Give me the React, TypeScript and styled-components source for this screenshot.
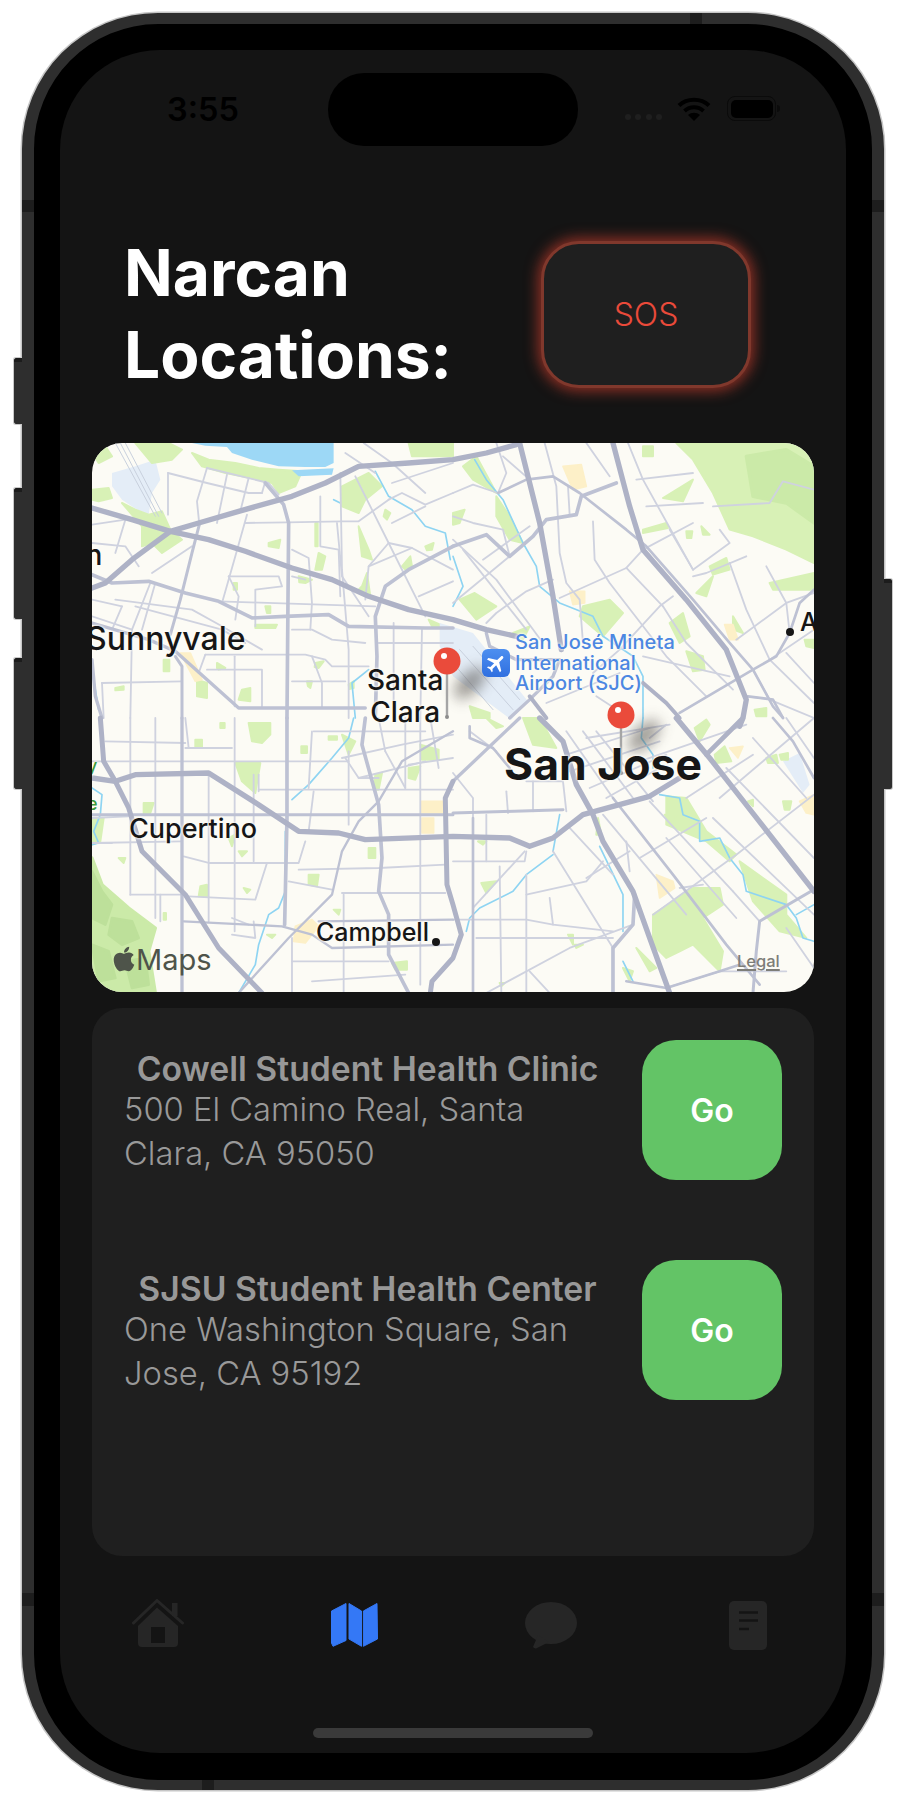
import React from "react";
import styled, { createGlobalStyle } from "styled-components";
import { FaApple } from "react-icons/fa";

const Global = createGlobalStyle`
  html, body { margin: 0; padding: 0; background: #fff; }
  body { font-family: Inter, "Liberation Sans", sans-serif; }
`;

const Device = styled.div`
  position: relative;
  width: 906px;
  height: 1796px;
  overflow: hidden;
  padding-top: 13px;
  box-sizing: border-box;
`;

const Frame = styled.div`
  box-sizing: border-box;
  width: 862px;
  margin-left: 22px;
  border: 12px solid #2e2e2e;
  border-top-width: 11px;
  border-bottom-width: 10px;
  border-radius: 136px;
  background: #000;
  padding: 26px 26px 27px;
  box-shadow: 0 0 0 1.5px #c6c6c6;
`;

const SideButton = styled.div<{ $top: number; $h: number; $right?: boolean }>`
  position: absolute;
  top: ${(p) => p.$top}px;
  height: ${(p) => p.$h}px;
  width: 9px;
  box-sizing: border-box;
  ${(p) => (p.$right ? "left: 884px;" : "left: 13px;")}
  background: linear-gradient(#1c1c1c 0 4px, #2e2e2e 4px);
  border: 1px solid #c8c8c8;
  ${(p) => (p.$right ? "border-left: 0;" : "border-right: 0;")}
  border-radius: ${(p) => (p.$right ? "0 3px 3px 0" : "3px 0 0 3px")};
`;

const Band = styled.div<{ $x: number; $y: number; $w: number; $h: number }>`
  position: absolute;
  left: ${(p) => p.$x}px;
  top: ${(p) => p.$y}px;
  width: ${(p) => p.$w}px;
  height: ${(p) => p.$h}px;
  background: #1d1d1d;
`;

const Screen = styled.div`
  height: 1703px;
  border-radius: 100px;
  background: #141414;
  overflow: hidden;
`;

const StatusBar = styled.div`
  display: grid;
  grid-template-columns: 1fr 250px 1fr;
  margin-top: 23px;
  height: 73px;
`;

const Time = styled.div`
  padding: 22px 0 0 107px;
  font-size: 32.5px;
  line-height: 30px;
  font-weight: 600;
  color: #000;
`;

const Island = styled.div`
  background: #000;
  border-radius: 36px;
`;

const StatusIcons = styled.div`
  display: flex;
  justify-content: flex-end;
  align-items: flex-end;
  height: 25px;
  padding: 23px 70px 0 0;
`;

const Dots = styled.div`
  display: flex;
  gap: 4.5px;
  margin-right: 15px;
  padding-bottom: 1px;
`;

const Dot = styled.span`
  width: 6px;
  height: 6px;
  border-radius: 50%;
  background: #1f1f1f;
`;

const Battery = styled.div`
  position: relative;
  box-sizing: border-box;
  width: 49px;
  height: 25px;
  margin-left: 16px;
  padding: 2.5px;
  border: 1.5px solid #0b0b0b;
  border-radius: 8px;
  &::before {
    content: "";
    display: block;
    height: 100%;
    background: #000;
    border-radius: 5px;
  }
  &::after {
    content: "";
    position: absolute;
    right: -5px;
    top: 8px;
    width: 3px;
    height: 7px;
    border-radius: 0 3px 3px 0;
    background: #0b0b0b;
  }
`;

const Header = styled.div`
  display: flex;
  justify-content: space-between;
  align-items: center;
  margin-top: 86px;
  padding: 0 95px 0 64px;
`;

const Title = styled.h1`
  margin: 0;
  font-size: 64px;
  line-height: 82px;
  font-weight: 700;
  color: #fff;
`;

const SosButton = styled.div`
  display: flex;
  align-items: center;
  justify-content: center;
  width: 210px;
  height: 147px;
  box-sizing: border-box;
  border-radius: 38px;
  border: 3px solid #80382c;
  background: #1f1f1f;
  box-shadow: 0 0 14px 3px rgba(226, 66, 48, 0.6);
  color: #ea4a3a;
  font-size: 32px;
  font-weight: 300;
`;

const MapBox = styled.div`
  position: relative;
  width: 722px;
  height: 549px;
  margin: 47px 32px 0;
  border-radius: 30px;
  overflow: hidden;
  background: #fcfbf5;
`;

const MapArt = styled.svg`
  display: block;
  width: 722px;
  height: 549px;
  filter: blur(0.45px);
`;

const MapLabel = styled.span<{ $x: number; $y: number; $size: number; $lh?: number; $weight?: number; $color?: string; $ls?: number; $center?: boolean }>`
  position: absolute;
  left: ${(p) => p.$x - 92}px;
  top: ${(p) => p.$y - 443 - (p.$lh ?? 0.9 * p.$size) / 2 - 0.3635 * p.$size}px;
  font-size: ${(p) => p.$size}px;
  line-height: ${(p) => p.$lh ?? 0.9 * p.$size}px;
  font-weight: ${(p) => p.$weight ?? 500};
  color: ${(p) => p.$color ?? "#161616"};
  letter-spacing: ${(p) => p.$ls ?? 0}px;
  text-align: ${(p) => (p.$center ? "center" : "left")};
  white-space: nowrap;
  text-shadow: 0 0 3px #fdfcf6, 0 0 3px #fdfcf6;
`;

const PoiDot = styled.i<{ $x: number; $y: number }>`
  position: absolute;
  left: ${(p) => p.$x - 92 - 4}px;
  top: ${(p) => p.$y - 443 - 4}px;
  width: 8px;
  height: 8px;
  border-radius: 50%;
  background: #161616;
`;

const AirportBadge = styled.div`
  position: absolute;
  left: 390px;
  top: 206px;
  width: 28px;
  height: 28px;
  display: flex;
  align-items: center;
  justify-content: center;
  border-radius: 6px;
  background: linear-gradient(#4d8ff0, #2f6fe0);
  & svg {
    width: 23px;
    height: 23px;
    transform: rotate(45deg);
    fill: #fff;
  }
`;

const Attribution = styled.div`
  position: absolute;
  left: 21px;
  top: 502px;
  display: flex;
  align-items: center;
  gap: 1px;
  color: #4e544a;
  font-size: 29px;
  line-height: 30px;
  & svg {
    width: 22px;
    height: 28px;
    margin-top: -2px;
  }
`;

const Legal = styled.span`
  position: absolute;
  left: 645px;
  top: 508px;
  font-size: 16.5px;
  line-height: 20px;
  font-weight: 500;
  color: #7d7d78;
  text-decoration: underline;
  text-decoration-thickness: 2px;
  text-underline-offset: 2px;
`;

const Panel = styled.div`
  width: 722px;
  height: 548px;
  box-sizing: border-box;
  margin: 16px 32px 0;
  padding: 32px 32px 0;
  border-radius: 30px;
  background: #1f1f1f;
  display: flex;
  flex-direction: column;
  gap: 80px;
`;

const Row = styled.div`
  display: flex;
  justify-content: space-between;
  height: 140px;
`;

const Info = styled.div`
  width: 487px;
  padding-top: 10px;
`;

const PlaceName = styled.div`
  font-size: 33.7px;
  line-height: 37px;
  font-weight: 600;
  color: #989898;
  text-align: center;
`;

const Address = styled.div`
  font-size: 32.7px;
  line-height: 44px;
  font-weight: 300;
  color: #999;
`;

const GoButton = styled.div`
  display: flex;
  align-items: center;
  justify-content: center;
  width: 140px;
  height: 140px;
  border-radius: 34px;
  background: #63c466;
  color: #fff;
  font-size: 32px;
  font-weight: 600;
`;

const TabBar = styled.div`
  display: grid;
  grid-template-columns: repeat(4, 1fr);
  height: 52px;
  margin-top: 43px;
`;

const Tab = styled.div`
  display: flex;
  align-items: center;
  justify-content: center;
`;

const HomeIndicator = styled.div`
  width: 280px;
  height: 10px;
  margin: 77px auto 0;
  border-radius: 5px;
  background: #3a3a3a;
`;

type Quad = { ox: number; oy: number; green: string[]; dark?: string[]; deep?: string[]; yellow?: string[]; blue?: string[]; water?: string[]; river: string[]; rail?: string[]; minor: string[]; mid: [string, number][]; major: [string, number][] };

const quads: Quad[] = [
  {
    ox: 0,
    oy: 0,
    water: ["300,0 725,0 725,60 700,72 640,72 560,70 480,50 420,30 405,12 340,8", "600,82 725,76 720,95 620,100"],
    blue: ["60,90 130,70 190,50 205,110 180,150 170,215 150,210 90,170 60,130"],
    green: [
      "300,30 350,50 430,60 500,75 560,80 630,85 610,130 560,150 540,120 500,110 400,90 330,70",
      "130,0 230,0 270,20 240,50 180,60",
      "0,140 50,135 60,165 20,175 0,170",
      "90,180 130,200 170,215 210,205 235,260 270,290 210,330 180,300 150,310 150,250",
      "750,130 830,90 870,130 820,170 800,210 750,190",
      "530,300 565,290 560,315 530,310",
      "950,0 1083,0 1083,40 960,40",
      "0,30 40,10 60,40 20,60",
      "680,330 700,340 690,380 670,380",
      "930,370 955,340 960,370 940,380",
      "620,400 660,410 640,420 622,418",
      "810,430 825,390 835,460 800,440",
      "880,200 895,210 885,230 875,220",
      "800,250 830,320 840,350 810,340",
      "1000,310 1025,300 1020,320 1005,322",
      "490,545 555,545 550,555 490,555",
      "520,490 535,490 535,510 525,510",
      "425,420 435,420 435,440 425,440",
      "375,660 400,675 380,680 375,675",
      "670,660 695,655 680,675 668,672",
      "215,650 232,650 232,685 215,685",
      "315,710 345,720 345,765 315,760",
      "450,740 475,735 475,775 440,770",
      "645,715 660,715 655,735 648,730",
      "70,735 95,730 95,740 70,742",
      "770,725 785,715 785,735 772,738",
      "1010,530 1045,545 1040,555 1020,550",
      "670,240 677,240 677,310 670,310",
    ],
    yellow: ["265,630 295,630 330,710 310,715"],
    river: ["850,85 890,160 960,200 1000,250 1060,270 1075,350", "790,825 780,720 830,680", "725,170 745,180", "0,680 20,800"],
    rail: ["70,0 190,220", "85,0 200,220", "100,0 210,210"],
    minor: [
      "228,90 228,215", "228,90 345,120 470,150 510,150", "345,75 315,175 322,245", "345,75 530,120 560,155",
      "405,95 375,240", "470,105 445,205", "460,240 585,238 750,235 800,235 890,170", "465,215 430,340 390,480",
      "510,150 520,115", "745,90 750,380 770,620 770,825", "685,160 685,310 740,320 745,460", "600,320 650,345 660,480 655,560",
      "890,170 930,150 1000,185 1083,150", "790,100 890,300 1000,520", "890,300 960,315 1083,380", "830,370 960,315",
      "980,460 1083,415", "180,390 300,310", "0,300 100,310 140,370", "100,230 70,330", "0,245 100,230",
      "175,420 120,560 115,825", "70,470 300,500 390,550 510,620", "90,490 60,560", "410,400 560,400 570,430 490,440 490,550",
      "410,400 440,460 430,530", "380,475 850,490", "340,635 640,635 700,650 720,670 830,670", "30,720 270,715", "30,720 35,825",
      "345,680 510,680 510,790", "428,640 428,790", "660,640 690,720 690,795", "600,715 760,715", "905,540 905,825", "990,560 985,825",
      "340,635 320,690", "860,600 1083,600", "600,560 660,560 720,590 820,600", "190,420 150,560", "130,490 390,560 460,600",
      "600,400 640,410", "735,240 750,400 830,520", "890,300 830,370 820,470", "0,470 90,490", "0,520 120,560",
      "900,120 1083,60", "760,30 850,90", "815,0 900,60 1000,150", "900,240 1000,190",
    ],
    mid: [
      ["0,395 60,420 170,415 280,450 380,475 480,525 580,520 710,515 770,550 1000,555 1083,555", 11],
      ["520,120 575,185 590,240 585,825", 11],
      ["850,825 855,640 850,520 880,430 950,380 1083,310", 11],
      ["322,245 300,330 265,470 235,575", 9],
      ["0,540 170,590 250,625 440,795 820,795", 10],
      ["0,650 10,760 30,825", 10],
      ["250,640 270,670 270,825", 9],
    ],
    major: [
      ["0,195 120,230 235,265 350,290 460,325 600,375 720,410 830,460 950,500 1083,530 1183,560 1273,580", 16],
      ["0,435 40,420 120,350 235,265 320,240 440,205 600,160 700,120 800,70 950,60 1083,50 1183,30 1273,5", 16],
    ],
  },
  {
    ox: 361,
    oy: 0,
    blue: ["-40,540 60,570 100,620 225,775 175,830 0,700 -40,610"],
    green: [
      "670,0 1083,0 1083,360 1000,320 900,280 830,260 780,150 720,50",
      "770,370 820,345 830,380 780,395",
      "950,420 1083,390 1083,440 960,440",
      "20,470 65,450 130,490 70,530",
      "390,490 470,470 510,510 450,580 380,520",
      "130,160 170,220 210,300 170,290 130,220",
      "570,10 600,10 600,40 570,40",
      "30,70 70,40 130,150 60,110",
      "0,210 35,200 20,240 0,245",
      "570,260 640,240 645,255 570,270",
      "630,165 720,110 690,175",
      "700,265 718,265 715,285 702,285",
      "745,250 770,275 750,275",
      "650,540 690,510 710,580 680,600",
      "700,625 750,640 755,680 720,685",
      "730,450 780,400 760,460",
      "840,520 870,570 840,560",
      "180,570 230,550 210,590",
      "1055,590 1083,590 1083,615 1060,610",
      "50,790 110,810 110,825 60,825",
      "905,800 940,795 940,820 910,820",
    ],
    dark: ["880,40 1000,20 1083,70 1083,240 1000,180 900,160"],
    yellow: ["330,70 385,65 400,130 360,140", "350,445 395,445 395,480 360,485", "815,545 840,545 855,590 830,590"],
    river: ["65,50 100,110 150,170 210,300 250,370 260,430 320,480 420,520 450,580 540,640 570,700 570,825", "0,340 30,430 0,490"],
    rail: ["20,620 180,800", "60,610 200,770", "0,660 120,800"],
    minor: [
      "0,150 60,125 135,150", "275,0 310,130 320,330 340,420 380,470 390,600", "400,0 470,100", "525,0 570,110 720,380",
      "130,0 160,90 135,150", "0,220 60,240 150,260 170,340", "420,235 425,350 470,420 640,640 760,760", "320,465 520,375 570,320 720,240",
      "100,540 130,510 220,445 300,410", "0,290 130,410 270,600", "30,320 220,560", "0,480 170,340", "660,460 620,490 500,620 420,690",
      "630,490 700,600 840,740", "520,375 630,490", "850,590 1000,480 1083,450", "1000,480 1010,570", "880,760 960,770", "900,680 950,770 1083,825",
      "720,380 830,300 800,260", "650,260 720,380", "720,400 760,390 880,340", "830,360 880,500 950,650 1083,780", "940,370 1000,480",
      "570,640 830,700", "345,130 350,215", "150,40 230,110", "90,350 230,250", "550,110 720,90", "580,190 750,180", "780,190 950,180 990,115 1083,140",
      "280,780 500,690", "430,760 530,825", "1000,630 1083,720", "950,650 1083,560",
    ],
    mid: [
      ["135,150 220,110 300,100 380,150 520,260 580,310 720,470 830,600 900,680 960,790 990,825", 8],
      ["0,310 100,275 170,340 240,280 280,230 370,215 385,160 490,120", 11],
      ["100,570 110,610 190,650 320,650 300,700 230,770 170,825", 10],
      ["1083,440 1040,480 1010,570 970,640 900,680 680,810", 8],
      ["885,760 960,770 990,825", 8],
    ],
    major: [
      ["200,0 260,240 300,460 325,620", 16],
      ["480,0 530,190 570,320 700,470 820,620 880,770 870,825 860,850", 16],
      ["570,720 640,780 680,825", 12],
      ["230,760 280,825", 12],
    ],
  },
  {
    ox: 0,
    oy: 275,
    green: [
      "430,135 505,135 490,225 450,190",
      "470,15 535,15 535,50 510,75 480,70",
      "310,65 330,65 330,90 310,90",
      "385,15 398,15 398,30 385,30",
      "628,85 645,85 645,105 628,105",
      "710,55 735,55 735,65 710,65",
      "750,50 790,70 770,110",
      "850,170 870,165 860,215 845,215",
      "950,150 985,145 970,185 950,180",
      "985,80 1040,95 1040,125 990,125",
      "155,255 185,255 175,285 155,285",
      "325,505 345,500 345,535 320,535",
      "455,510 475,515 465,525",
      "650,470 680,470 675,505 650,500",
      "830,390 850,390 850,420 830,420",
      "725,575 745,575 740,590",
      "525,650 550,650 540,660",
      "900,735 945,730 945,755 910,755",
      "440,400 465,400 450,415",
      "410,360 430,350 420,385",
      "80,420 100,420 95,435",
      "0,300 35,300 25,370 0,380",
      "215,585 222,585 222,605 215,605",
    ],
    dark: ["0,420 30,500 110,570 190,630 170,700 190,825 60,825 0,760"],
    deep: ["0,460 30,520 60,560 40,620 0,600", "60,600 120,610 140,660 90,680 50,650", "0,680 50,700 70,780 20,790", "100,730 160,720 170,800 120,810"],
    yellow: ["988,250 1058,250 1058,285 988,285", "990,300 1025,300 1025,345 990,345", "610,625 660,605 680,625 640,675 605,670"],
    river: ["785,0 770,60 720,120 650,200 600,245", "580,340 580,520 560,570 530,590 500,680 490,740 440,825", "0,210 30,230 25,290 5,340 20,375 0,380"],
    minor: [
      "115,0 115,530", "190,0 190,600", "350,165 350,610", "428,0 428,640", "485,170 485,430", "665,220 650,340", "770,100 770,320", "985,0 985,800",
      "40,70 280,75", "280,90 420,90", "40,130 770,130", "500,215 1083,215", "0,375 270,370", "275,415 350,435 620,435 640,370", "590,490 720,515",
      "620,455 860,450 1060,440", "115,530 270,530", "290,535 490,545 525,435", "750,525 1060,525", "420,650 490,660 485,610", "600,730 890,730", "600,660 600,825",
      "755,530 755,825", "660,790 940,770", "750,120 930,80 1083,50", "760,120 800,180 860,180", "880,100 940,210", "800,180 1000,130", "665,40 1000,40",
      "940,0 940,210", "860,0 880,100", "1015,0 1040,150", "0,300 110,295", "10,375 60,375", "280,0 290,90", "660,40 650,210", "500,170 500,220",
      "205,530 205,610", "420,600 470,620", "0,130 40,130", "1083,120 950,140",
    ],
    mid: [
      ["270,0 270,825", 10],
      ["585,0 585,300 578,620", 11],
      ["820,0 810,80 860,260 870,420 860,520 890,590 890,710 950,825", 11],
      ["0,290 1083,290", 9],
      ["275,610 570,625 660,650 720,690 1083,680", 7],
      ["680,610 1083,605", 7],
      ["440,825 590,660 720,530 750,400 800,310 860,250 930,130 1083,40", 7],
    ],
    major: [
      ["25,0 35,130 70,190 110,270 150,400 280,530 380,690 510,825", 15],
      ["0,180 70,190 130,170 350,165 500,260 620,340 740,345 820,365 1083,355 1253,360 1313,385 1383,360 1473,290 1673,235 1763,180", 16],
      ["1083,190 1060,240 1065,500 1083,560 1108,650 1083,720 1020,790 1015,825", 15],
    ],
  },
  {
    ox: 361,
    oy: 275,
    blue: ["990,130 1040,105 1070,200 1050,225"],
    green: [
      "600,590 720,510 800,510 810,560 750,600 810,700 800,760 720,680 680,700 640,720 600,680",
      "860,430 1000,530 1000,590 1060,660 980,640 900,550",
      "640,235 700,240 760,340 850,410 830,430 760,370 640,320",
      "210,0 260,0 310,90 240,80",
      "785,110 815,85 835,130 790,135",
      "725,30 760,5 770,20 740,70",
      "940,120 970,110 975,135 945,135",
      "980,110 1005,105 1005,125 985,125",
      "990,250 1015,250 1010,275 995,275",
      "85,495 130,490 100,525",
      "550,690 610,750 590,760",
      "510,750 540,760 530,790",
      "635,290 670,290 660,320",
      "345,650 360,650 360,680",
      "365,680 390,680 370,690",
      "140,795 155,795 145,805",
      "75,370 100,370 90,380",
      "885,250 900,245 900,265",
      "435,300 445,350 430,350",
      "100,0 150,25 130,30",
    ],
    yellow: ["610,470 660,490 665,510 620,540", "1040,250 1083,230 1083,290 1060,285", "830,90 870,85 855,120"],
    river: ["620,230 680,240 690,290 740,310 740,370 800,360 830,420 870,470 880,520 1000,560 1030,600 1050,660 1083,670", "300,410 220,470 180,520 80,570 50,600 40,640", "440,385 510,530 510,640", "570,0 565,60 600,110 600,150", "320,290 300,400", "1030,590 1083,560", "510,730 540,790"],
    minor: [
      "0,165 60,240 60,300", "220,190 330,190 340,280", "240,190 240,280", "160,220 165,285", "0,430 215,430 220,400", "220,530 400,490 450,430",
      "290,540 300,620", "300,400 480,690", "0,605 220,605 300,620 480,640", "70,660 480,660", "140,445 145,825", "215,400 60,570", "220,470 220,825",
      "100,825 350,690 540,620", "230,760 290,825", "350,330 480,470", "400,480 530,400", "450,290 700,590", "590,250 840,520", "600,590 850,410 1083,230",
      "680,510 750,500", "780,300 1083,590", "820,150 1083,420", "900,60 1060,240", "1000,0 1083,120", "800,240 1083,0", "560,130 880,20", "400,60 650,20",
      "640,810 800,760 1000,760", "340,40 480,240", "390,40 540,240", "430,40 600,250", "340,110 590,30", "350,160 620,70", "410,210 640,110",
      "460,240 620,150", "100,290 100,430", "700,240 900,110", "560,420 760,300", "640,360 850,600", "520,370 530,460", "130,100 50,40",
      "590,60 640,20", "840,520 920,610", "1000,630 1083,750",
    ],
    mid: [
      ["60,300 60,825", 8],
      ["0,285 330,275", 9],
      ["480,240 660,470 820,680 920,800", 8],
      ["1083,515 920,610 910,700 900,825", 9],
      ["480,825 480,690 540,620 545,530", 11],
      ["520,790 640,810 800,760 860,740", 8],
      ["50,25 50,60 120,90 170,150", 8],
      ["0,190 200,0", 10],
      ["960,0 1020,70 1083,180", 8],
    ],
    major: [
      ["260,0 330,70 370,200 420,290 450,370 540,520 590,660 650,825", 16],
      ["670,0 770,120 1083,520", 16],
      ["870,0 760,110", 14],
    ],
  },
];

const Pin = ({ x, headY, baseY, shadowX, shadowY }: { x: number; headY: number; baseY: number; shadowX: number; shadowY: number }) => (
  <g>
    <ellipse cx={shadowX} cy={shadowY} rx="20" ry="10" fill="#4f4c46" opacity="0.55" filter="url(#soft)" transform={`rotate(-45 ${shadowX} ${shadowY})`} />
    <rect x={x - 1.2} y={headY} width="2.4" height={baseY - headY} fill="#a5a5a5" />
    <circle cx={x} cy={baseY} r="2" fill="#8d8d8d" />
    <circle cx={x} cy={headY} r="13.5" fill="#ea4b3b" />
    <circle cx={x - 3} cy={headY - 5} r="3" fill="#fff" />
  </g>
);

const MapDrawing = () => (
  <MapArt viewBox="0 0 722 549">
    <defs>
      <filter id="soft" x="-80%" y="-80%" width="260%" height="260%">
        <feGaussianBlur stdDeviation="7" />
      </filter>
    </defs>
    {quads.map((q, i) => (
      <g key={i} transform={`translate(${q.ox} ${q.oy}) scale(0.3333)`} strokeLinejoin="round" strokeLinecap="round">
        {q.blue?.map((d, k) => <polygon key={k} points={d} fill="#e4edf7" />)}
        {q.green.map((d, k) => <polygon key={k} points={d} fill="#d8f1b6" stroke="#d8f1b6" strokeWidth="6" />)}
        {q.dark?.map((d, k) => <polygon key={k} points={d} fill="#cbeaa8" stroke="#cbeaa8" strokeWidth="10" />)}
        {q.deep?.map((d, k) => <polygon key={k} points={d} fill="#bde09a" stroke="#bde09a" strokeWidth="8" />)}
        {q.yellow?.map((d, k) => <polygon key={k} points={d} fill="#fdf0c8" stroke="#fdf0c8" strokeWidth="5" />)}
        {q.water?.map((d, k) => <polygon key={k} points={d} fill="#9dd8f6" />)}
        {q.rail?.map((d, k) => <polyline key={k} points={d} fill="none" stroke="#c8d0dd" strokeWidth="3" />)}
      </g>
    ))}
    {quads.map((q, i) => (
      <g key={i} transform={`translate(${q.ox} ${q.oy}) scale(0.3333)`} fill="none" strokeLinejoin="round" strokeLinecap="round">
        {q.river.map((d, k) => <polyline key={k} points={d} stroke="#8ed4f2" strokeWidth="5" />)}
        {q.minor.map((d, k) => <polyline key={k} points={d} stroke="#cfd2df" strokeWidth="5.5" />)}
      </g>
    ))}
    {quads.map((q, i) => (
      <g key={i} transform={`translate(${q.ox} ${q.oy}) scale(0.3333)`} fill="none" strokeLinejoin="round" strokeLinecap="round">
        {q.mid.map(([d, w], k) => <polyline key={k} points={d} stroke="#bdc1d3" strokeWidth={w} />)}
      </g>
    ))}
    {quads.map((q, i) => (
      <g key={i} transform={`translate(${q.ox} ${q.oy}) scale(0.3333)`} fill="none" strokeLinejoin="round" strokeLinecap="round">
        {q.major.map(([d, w], k) => <polyline key={k} points={d} stroke="#aeb2c6" strokeWidth={w} />)}
      </g>
    ))}
    <Pin x={355} headY={218} baseY={274} shadowX={378} shadowY={240} />
    <Pin x={529} headY={272} baseY={330} shadowX={552} shadowY={293} />
  </MapArt>
);

const Wifi = () => (
  <svg width="34" height="25" viewBox="0 0 34 25" fill="none">
    <path d="M2 9.5C10 1.8 24 1.8 32 9.5" stroke="#000" strokeWidth="4" />
    <path d="M7.5 15C12.8 10 21.2 10 26.5 15" stroke="#000" strokeWidth="4" />
    <path d="M17 25L11 19C14.4 16 19.6 16 23 19Z" fill="#000" />
  </svg>
);

const HomeIcon = () => (
  <svg width="52" height="52" viewBox="0 0 52 52" fill="#262626">
    <path d="M1.5 24L25 1.5L50.5 24" fill="none" stroke="#262626" strokeWidth="3" strokeLinecap="round" strokeLinejoin="round" />
    <rect x="40" y="4" width="5.5" height="13" />
    <path d="M6 27L25 8.5L46 27V44a4 4 0 0 1-4 4H10a4 4 0 0 1-4-4Z" />
    <rect x="19" y="28" width="14" height="16" fill="#141414" />
  </svg>
);

const MapIcon = () => (
  <svg width="47" height="44" viewBox="0 0 47 44" fill="#3478f6" stroke="#3478f6" strokeWidth="1" strokeLinejoin="round">
    <path d="M15 .5V37.5L2 43.3L.5 40V8Z" />
    <path d="M18 .5L30.5 8V43.3L18 36Z" />
    <path d="M32.4 8L46 .5L46.5 36L32.4 43.3Z" />
  </svg>
);

const ChatIcon = () => (
  <svg width="52" height="47" viewBox="0 0 52 47" fill="#262626">
    <ellipse cx="26" cy="21" rx="26" ry="21" />
    <path d="M13 33L8 45Q10 47.5 13 45.5L24 40Z" />
  </svg>
);

const DocIcon = () => (
  <svg width="38" height="49" viewBox="0 0 38 49">
    <rect width="38" height="49" rx="5" fill="#262626" />
    <path d="M10 11.5H29M10 19.5H29M10 28H20" stroke="#141414" strokeWidth="2.6" />
  </svg>
);

const places = [
  { name: "Cowell Student Health Clinic", address: "500 El Camino Real, Santa Clara, CA 95050" },
  { name: "SJSU Student Health Center", address: "One Washington Square, San Jose, CA 95192" },
];

export default function App() {
  return (
    <>
      <Global />
      <Device>
        <SideButton $top={357} $h={68} />
        <SideButton $top={487} $h={133} />
        <SideButton $top={657} $h={133} />
        <SideButton $top={578} $h={212} $right />
        <Frame>
          <Screen>
            <StatusBar>
              <Time>3:55</Time>
              <Island />
              <StatusIcons>
                <Dots>
                  <Dot />
                  <Dot />
                  <Dot />
                  <Dot />
                </Dots>
                <Wifi />
                <Battery />
              </StatusIcons>
            </StatusBar>
            <Header>
              <Title>
                Narcan
                <br />
                Locations:
              </Title>
              <SosButton>SOS</SosButton>
            </Header>
            <MapBox>
              <MapDrawing />
              <MapLabel $x={85.5} $y={566} $size={28}>n</MapLabel>
              <MapLabel $x={86} $y={651} $size={32}>Sunnyvale</MapLabel>
              <MapLabel $x={367} $y={690} $size={28} $lh={32} $center>
                Santa
                <br />
                Clara
              </MapLabel>
              <MapLabel $x={129} $y={839} $size={27}>Cupertino</MapLabel>
              <MapLabel $x={316} $y={941} $size={25}>Campbell</MapLabel>
              <PoiDot $x={436} $y={942} />
              <MapLabel $x={504} $y={780} $size={44.5} $weight={700}>San Jose</MapLabel>
              <MapLabel $x={515} $y={650} $size={20} $lh={20.5} $color="#4c87e2" $ls={0.1}>
                San José Mineta
                <br />
                International
                <br />
                Airport (SJC)
              </MapLabel>
              <AirportBadge>
                <svg viewBox="0 0 24 24">
                  <path d="M21 16v-2l-8-5V3.5c0-.83-.67-1.5-1.5-1.5S10 2.67 10 3.5V9l-8 5v2l8-2.5V19l-2 1.5V22l3.5-1 3.5 1v-1.5L13 19v-5.5l8 2.5z" />
                </svg>
              </AirportBadge>
              <PoiDot $x={790} $y={632} />
              <MapLabel $x={800} $y={631} $size={25}>A</MapLabel>
              <MapLabel $x={87} $y={773} $size={18} $color="#3d9a3d">y</MapLabel>
              <MapLabel $x={87} $y={811} $size={18} $color="#3d9a3d">e</MapLabel>
              <Attribution>
                <FaApple />
                <span>Maps</span>
              </Attribution>
              <Legal>Legal</Legal>
            </MapBox>
            <Panel>
              {places.map((p) => (
                <Row key={p.name}>
                  <Info>
                    <PlaceName>{p.name}</PlaceName>
                    <Address>{p.address}</Address>
                  </Info>
                  <GoButton>Go</GoButton>
                </Row>
              ))}
            </Panel>
            <TabBar>
              <Tab>
                <HomeIcon />
              </Tab>
              <Tab>
                <MapIcon />
              </Tab>
              <Tab>
                <ChatIcon />
              </Tab>
              <Tab>
                <DocIcon />
              </Tab>
            </TabBar>
            <HomeIndicator />
          </Screen>
        </Frame>
        <Band $x={22} $y={200} $w={12} $h={12} />
        <Band $x={872} $y={200} $w={12} $h={12} />
        <Band $x={22} $y={1593} $w={12} $h={13} />
        <Band $x={872} $y={1593} $w={12} $h={13} />
        <Band $x={690} $y={13} $w={12} $h={11} />
        <Band $x={202} $y={1780} $w={12} $h={10} />
      </Device>
    </>
  );
}
